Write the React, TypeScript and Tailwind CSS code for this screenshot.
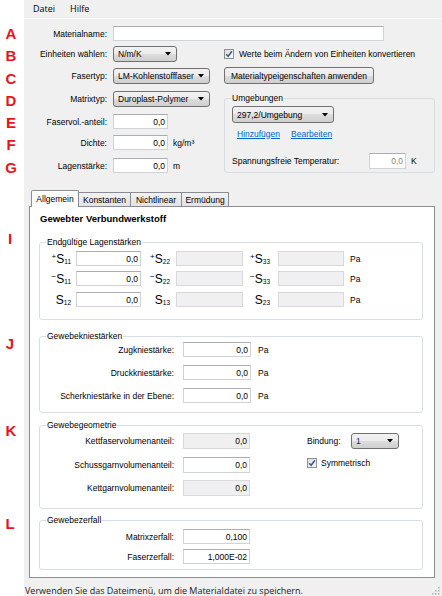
import React from "react";

const Arrow = () => (
  <svg width="6" height="4" viewBox="0 0 6 4" className="shrink-0">
    <path d="M0 0 L6 0 L3 3.5 Z" fill="#000" />
  </svg>
);

const Combo = ({ className = "", text, textClass = "" }: { className?: string; text: string; textClass?: string }) => (
  <div
    className={`h-[16px] flex items-center justify-between border border-[#707070] rounded-[3px] bg-[linear-gradient(#f2f2f2,#ebebeb_50%,#dddddd_50%,#cfcfcf)] pl-[4px] pr-[5px] ${className}`}
  >
    <span className={`whitespace-nowrap ${textClass}`}>{text}</span>
    <Arrow />
  </div>
);

const TextBox = ({
  className = "",
  value = "",
  disabled = false,
  valueClass = "",
}: {
  className?: string;
  value?: string;
  disabled?: boolean;
  valueClass?: string;
}) => (
  <div
    className={`h-[15px] flex items-center justify-end pr-[2px] border ${
      disabled ? "bg-[#f0f0f0] border-[#d7d9dc]" : "bg-white border-[#cfd3d9] border-t-[#abadb3]"
    } ${className}`}
  >
    <span className={`whitespace-nowrap ${valueClass}`}>{value}</span>
  </div>
);

const CheckBox = () => (
  <div className="w-[10px] h-[10px] shrink-0 border border-[#8e8f8f] bg-[linear-gradient(135deg,#dcdcdc,#fbfbfb)] flex items-center justify-center">
    <svg width="8" height="8" viewBox="0 0 8 8">
      <path d="M1.2 4.2 L3.2 6.3 L6.9 1.2" stroke="#3c5a9a" strokeWidth="1.5" fill="none" />
    </svg>
  </div>
);

const Group = ({
  title,
  className = "",
  innerClass = "",
  children,
}: {
  title: string;
  className?: string;
  innerClass?: string;
  children: React.ReactNode;
}) => (
  <fieldset className={`border border-[#d5dfe5] rounded-[3px] min-w-0 p-0 m-0 ${className}`}>
    <legend className="ml-[6px] px-[1px] leading-[10px] h-[10px]">{title}</legend>
    <div className={innerClass}>{children}</div>
  </fieldset>
);

const SLabel = ({ sign, sub, className = "" }: { sign?: string; sub: string; className?: string }) => (
  <div className={`text-right text-[12px] leading-[12px] whitespace-nowrap ${className}`}>
    {sign && <sup className="text-[8px]">{sign}</sup>}S<sub className="text-[6.5px]">{sub}</sub>
  </div>
);

const letters: { l: string; top: string }[] = [];

export default function App() {
  return (
    <div className="w-[442px] h-[596px] flex bg-white overflow-hidden font-['Liberation_Sans',Arial,sans-serif] text-[8.5px] leading-[10px] text-black">
      {/* annotation letters */}
      <div className="relative w-[24px] h-[596px] bg-white shrink-0 font-bold text-[15px] leading-[15px] text-[#e8141c]">
        <span className="absolute left-0 w-[22px] text-center top-[26px]">A</span>
        <span className="absolute left-0 w-[22px] text-center top-[48px]">B</span>
        <span className="absolute left-0 w-[22px] text-center top-[71px]">C</span>
        <span className="absolute left-0 w-[22px] text-center top-[93px]">D</span>
        <span className="absolute left-0 w-[22px] text-center top-[115px]">E</span>
        <span className="absolute left-0 w-[22px] text-center top-[137px]">F</span>
        <span className="absolute left-0 w-[22px] text-center top-[160px]">G</span>
        <span className="absolute left-0 w-[20px] text-center top-[231px]">I</span>
        <span className="absolute left-0 w-[20px] text-center top-[336px]">J</span>
        <span className="absolute left-0 w-[22px] text-center top-[423px]">K</span>
        <span className="absolute left-0 w-[20px] text-center top-[516px]">L</span>
      </div>

      {/* application window */}
      <div className="w-[418px] h-[596px] flex flex-col bg-[#f0f0f0]">
        {/* menu */}
        <div className="h-[19px] shrink-0 flex items-center gap-[15px] pl-[9px] border-b border-[#fbfbfb] font-['Open_Sans',sans-serif] text-[9px]">
          <span>Datei</span>
          <span>Hilfe</span>
        </div>

        {/* top form */}
        <div className="pt-[7px] shrink-0">
          <div className="h-[15px] flex items-center">
            <div className="w-[83px] text-right">Materialname:</div>
            <TextBox className="ml-[6px] w-[271px]" />
          </div>
          <div className="mt-[5px] flex">
            {/* left column */}
            <div className="w-[200px] flex flex-col">
              <div className="h-[16px] flex items-center">
                <div className="w-[83px] text-right">Einheiten wählen:</div>
                <Combo className="ml-[6px] w-[64px]" text="N/m/K" />
              </div>
              <div className="mt-[6px] h-[16px] flex items-center">
                <div className="w-[83px] text-right">Fasertyp:</div>
                <Combo className="ml-[6px] w-[97px]" text="LM-Kohlenstofffaser" />
              </div>
              <div className="mt-[7px] h-[16px] flex items-center">
                <div className="w-[83px] text-right">Matrixtyp:</div>
                <Combo className="ml-[6px] w-[97px]" text="Duroplast-Polymer" />
              </div>
              <div className="mt-[7px] h-[15px] flex items-center">
                <div className="w-[83px] text-right">Faservol.-anteil:</div>
                <TextBox className="ml-[6px] w-[55px]" value="0,0" />
              </div>
              <div className="mt-[6px] h-[15px] flex items-center">
                <div className="w-[83px] text-right">Dichte:</div>
                <TextBox className="ml-[6px] w-[55px]" value="0,0" />
                <span className="ml-[5px]">kg/m³</span>
              </div>
              <div className="mt-[8px] h-[15px] flex items-center">
                <div className="w-[83px] text-right">Lagenstärke:</div>
                <TextBox className="ml-[6px] w-[55px]" value="0,0" />
                <span className="ml-[5px]">m</span>
              </div>
            </div>

            {/* right column */}
            <div className="w-[211px] flex flex-col">
              <div className="h-[16px] flex items-center">
                <CheckBox />
                <span className="ml-[5px] whitespace-nowrap">Werte beim Ändern von Einheiten konvertieren</span>
              </div>
              <div className="mt-[5px] w-[150px] h-[17px] flex items-center justify-center border border-[#707070] rounded-[3px] bg-[linear-gradient(#f2f2f2,#ebebeb_50%,#dddddd_50%,#cfcfcf)]">
                Materialtypeigenschaften anwenden
              </div>
              <Group title="Umgebungen" className="mt-[9px] w-[211px]" innerClass="pl-[7px] pb-[3px]">
                <Combo className="mt-[3px] w-[102px] h-[17px]" text="297,2/Umgebung" />
                <div className="mt-[5px] h-[11px] flex items-center text-[#0066cc] underline">
                  <span className="ml-[5px]">Hinzufügen</span>
                  <span className="ml-[11px]">Bearbeiten</span>
                </div>
                <div className="mt-[14px] h-[16px] flex items-center">
                  <div className="w-[137px] whitespace-nowrap">Spannungsfreie Temperatur:</div>
                  <TextBox className="w-[37px] h-[16px]" value="0,0" valueClass="text-[#8a8a8a]" />
                  <span className="ml-[5px]">K</span>
                </div>
              </Group>
            </div>
          </div>
        </div>

        {/* tabs */}
        <div className="mt-[17px] ml-[5px] w-[406px] shrink-0">
          <div className="h-[16px] flex items-start pl-[2px]">
            <div className="relative z-10 w-[48px] h-[17px] bg-white border border-b-0 border-[#898c95] rounded-t-[2px] flex items-center justify-center pb-[1px]">
              Allgemein
            </div>
            <div className="mt-[2px] w-[52px] h-[14px] border-t border-r border-[#898c95] bg-[linear-gradient(#f2f2f2,#e3e3e3)] flex items-center justify-center">
              Konstanten
            </div>
            <div className="mt-[2px] w-[51px] h-[14px] border-t border-r border-[#898c95] bg-[linear-gradient(#f2f2f2,#e3e3e3)] flex items-center justify-center">
              Nichtlinear
            </div>
            <div className="mt-[2px] w-[47px] h-[14px] border-t border-r border-[#898c95] bg-[linear-gradient(#f2f2f2,#e3e3e3)] flex items-center justify-center">
              Ermüdung
            </div>
          </div>

          {/* panel */}
          <div className="h-[372px] bg-white border border-[#898c95] flex flex-col">
            <div className="pt-[6px] pl-[10px] font-bold text-[9.5px] leading-[11px]">Gewebter Verbundwerkstoff</div>

            <Group title="Endgültige Lagenstärken" className="mt-[13px] ml-[9px] w-[384px]" innerClass="pt-[4px] pb-[12px]">
              <div className="h-[15px] flex items-center">
                <SLabel className="w-[31px]" sign="+" sub="11" />
                <TextBox className="ml-[5px] w-[65px]" value="0,0" />
                <SLabel className="w-[29px]" sign="+" sub="22" />
                <TextBox className="ml-[6px] w-[67px]" disabled />
                <SLabel className="w-[27px]" sign="+" sub="33" />
                <TextBox className="ml-[8px] w-[66px]" disabled />
                <span className="ml-[6px]">Pa</span>
              </div>
              <div className="mt-[5px] h-[15px] flex items-center">
                <SLabel className="w-[31px]" sign="−" sub="11" />
                <TextBox className="ml-[5px] w-[65px]" value="0,0" />
                <SLabel className="w-[29px]" sign="−" sub="22" />
                <TextBox className="ml-[6px] w-[67px]" disabled />
                <SLabel className="w-[27px]" sign="−" sub="33" />
                <TextBox className="ml-[8px] w-[66px]" disabled />
                <span className="ml-[6px]">Pa</span>
              </div>
              <div className="mt-[6px] h-[15px] flex items-center">
                <SLabel className="w-[31px]" sub="12" />
                <TextBox className="ml-[5px] w-[65px]" value="0,0" />
                <SLabel className="w-[29px]" sub="13" />
                <TextBox className="ml-[6px] w-[67px]" disabled />
                <SLabel className="w-[27px]" sub="23" />
                <TextBox className="ml-[8px] w-[66px]" disabled />
                <span className="ml-[6px]">Pa</span>
              </div>
            </Group>

            <Group title="Gewebekniestärken" className="mt-[11px] ml-[9px] w-[384px]" innerClass="pt-[1px] pb-[9px]">
              <div className="h-[15px] flex items-center">
                <div className="w-[134px] text-right">Zugkniestärke:</div>
                <TextBox className="ml-[9px] w-[68px]" value="0,0" />
                <span className="ml-[7px]">Pa</span>
              </div>
              <div className="mt-[8px] h-[15px] flex items-center">
                <div className="w-[134px] text-right">Druckkniestärke:</div>
                <TextBox className="ml-[9px] w-[68px]" value="0,0" />
                <span className="ml-[7px]">Pa</span>
              </div>
              <div className="mt-[8px] h-[15px] flex items-center">
                <div className="w-[134px] text-right">Scherkniestärke in der Ebene:</div>
                <TextBox className="ml-[9px] w-[68px]" value="0,0" />
                <span className="ml-[7px]">Pa</span>
              </div>
            </Group>

            <Group title="Gewebegeometrie" className="mt-[7px] ml-[9px] w-[384px]" innerClass="pt-[3px] pb-[12px] flex">
              <div className="flex flex-col">
                <div className="h-[16px] flex items-center">
                  <div className="w-[134px] text-right">Kettfaservolumenanteil:</div>
                  <TextBox className="ml-[9px] w-[67px] h-[16px]" value="0,0" disabled />
                </div>
                <div className="mt-[8px] h-[16px] flex items-center">
                  <div className="w-[134px] text-right">Schussgarnvolumenanteil:</div>
                  <TextBox className="ml-[9px] w-[67px] h-[16px]" value="0,0" />
                </div>
                <div className="mt-[7px] h-[16px] flex items-center">
                  <div className="w-[134px] text-right">Kettgarnvolumenanteil:</div>
                  <TextBox className="ml-[9px] w-[67px] h-[16px]" value="0,0" disabled />
                </div>
              </div>
              <div className="ml-[57px] flex flex-col">
                <div className="h-[16px] flex items-center">
                  <div className="w-[44px]">Bindung:</div>
                  <Combo className="w-[48px] border-[#3c7fb1]" text="1" textClass="text-[#2e1a6e]" />
                </div>
                <div className="mt-[6px] h-[16px] flex items-center">
                  <CheckBox />
                  <span className="ml-[4px]">Symmetrisch</span>
                </div>
              </div>
            </Group>

            <Group title="Gewebezerfall" className="mt-[6px] ml-[9px] w-[384px]" innerClass="pt-[4px] pb-[5px]">
              <div className="h-[15px] flex items-center">
                <div className="w-[134px] text-right">Matrixzerfall:</div>
                <TextBox className="ml-[9px] w-[67px]" value="0,100" />
              </div>
              <div className="mt-[5px] h-[15px] flex items-center">
                <div className="w-[134px] text-right">Faserzerfall:</div>
                <TextBox className="ml-[9px] w-[67px]" value="1,000E-02" />
              </div>
            </Group>
          </div>
        </div>

        {/* status bar */}
        <div className="mt-[1px] h-[17px] shrink-0 flex items-start justify-between pt-[6px] pl-[1px] pr-[2px] font-['Open_Sans',sans-serif] text-[9px] leading-[11px] text-[#1a1a1a]">
          <span className="whitespace-nowrap">Verwenden Sie das Dateimenü, um die Materialdatei zu speichern.</span>
          <svg width="8" height="8" viewBox="0 0 8 8" className="mt-[2px]">
            <rect x="6" y="0" width="1.5" height="1.5" fill="#b0b0b0" />
            <rect x="3" y="3" width="1.5" height="1.5" fill="#b0b0b0" />
            <rect x="6" y="3" width="1.5" height="1.5" fill="#b0b0b0" />
            <rect x="0" y="6" width="1.5" height="1.5" fill="#b0b0b0" />
            <rect x="3" y="6" width="1.5" height="1.5" fill="#b0b0b0" />
            <rect x="6" y="6" width="1.5" height="1.5" fill="#b0b0b0" />
          </svg>
        </div>
      </div>
    </div>
  );
}
